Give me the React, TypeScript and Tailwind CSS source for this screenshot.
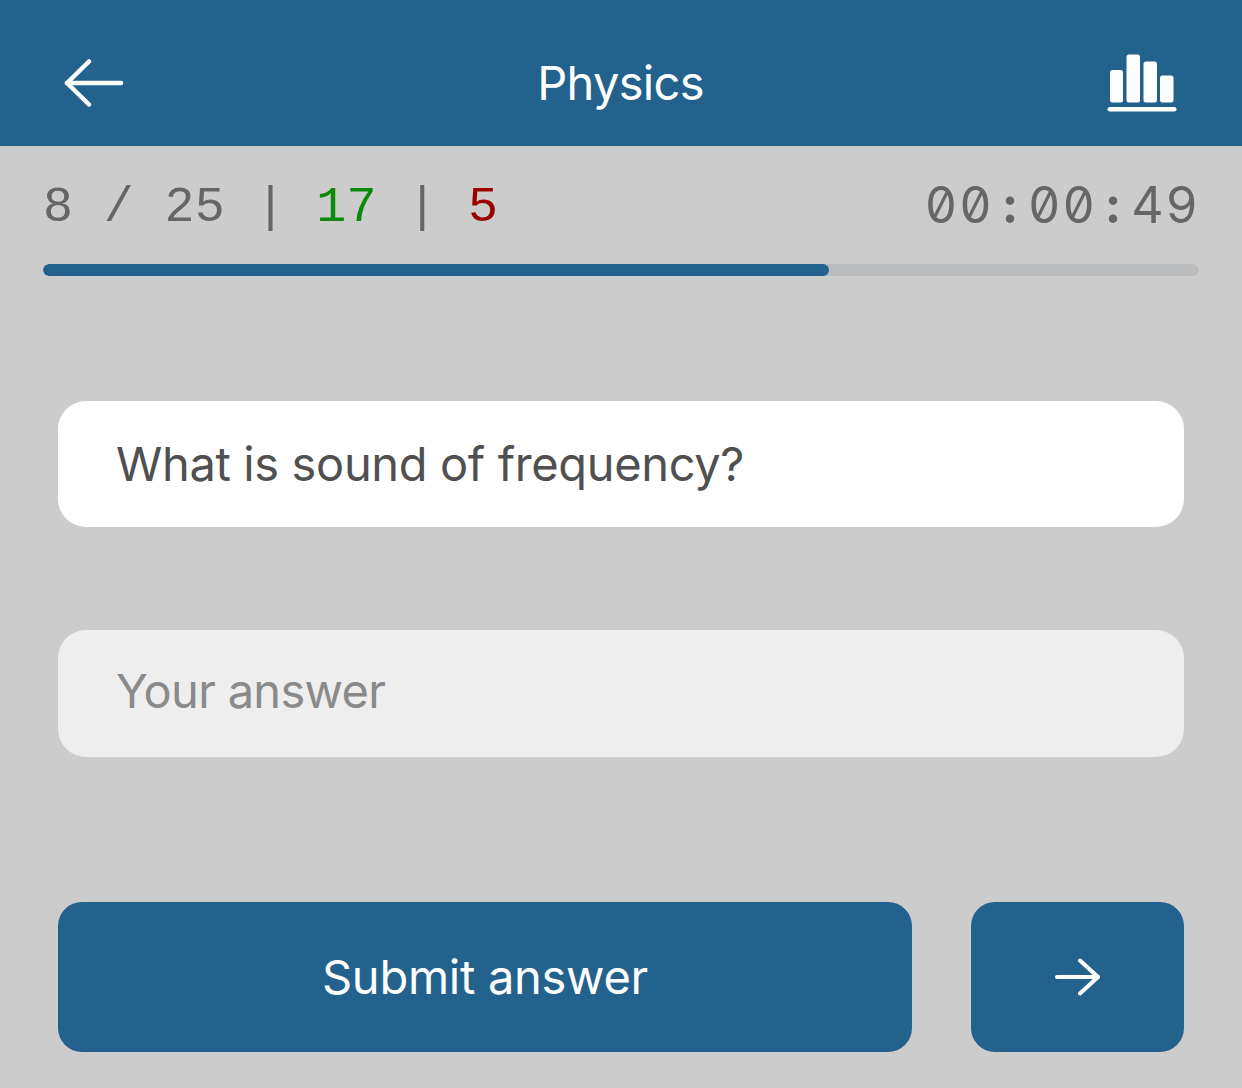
import React from 'react';

function BackArrow() {
  return (
    <svg width="60" height="48" viewBox="0 0 60 48" fill="none" stroke="white" strokeWidth="4.5" strokeLinecap="round" strokeLinejoin="round">
      <path d="M3 24H57" />
      <path d="M25 2.5L3 24L25 45.5" />
    </svg>
  );
}

function StatsIcon() {
  return (
    <svg width="70" height="58" viewBox="0 0 70 58" fill="white">
      <rect x="3" y="16" width="13" height="32.5" rx="2.5" />
      <rect x="19.5" y="0.5" width="13.5" height="48" rx="2.5" />
      <rect x="36.5" y="7.5" width="13.5" height="41" rx="2.5" />
      <rect x="53" y="21.5" width="13.5" height="27" rx="2.5" />
      <rect x="0.5" y="53" width="69" height="4.5" rx="2.25" />
    </svg>
  );
}

function NextArrow() {
  return (
    <svg width="46" height="38" viewBox="0 0 46 38" fill="none" stroke="white" strokeWidth="4" strokeLinecap="round" strokeLinejoin="round">
      <path d="M2 19H43" />
      <path d="M25 2.5L43 19L25 35.5" />
    </svg>
  );
}

const timer = '00:00:49'.split('');

export default function App() {
  const sans = "font-['Inter','Liberation_Sans',sans-serif]";

  return (
    <div className={`w-[1242px] h-[1088px] overflow-hidden bg-[#cccccc] ${sans}`}>
      {/* Header */}
      <div className="h-[146px] bg-[#24628e] grid grid-cols-[1fr_auto_1fr] items-center pt-[19px] pl-[64px] pr-[65px]">
        <BackArrow />
        <span className="text-[47px] leading-none text-white tracking-[-0.7px]">Physics</span>
        <div className="justify-self-end">
          <StatsIcon />
        </div>
      </div>

      {/* Counters */}
      <div className="px-[43px] pt-[33px]">
        <div className="flex items-center justify-between h-[58px] text-[50px] leading-none text-[#666666] font-['Liberation_Mono',monospace]">
          <div className="whitespace-pre tracking-[0.35px]">
            <span>8 / 25 | </span>
            <span className="text-[#0a8a0a]">17</span>
            <span> | </span>
            <span className="text-[#990000]">5</span>
          </div>
          <div className="flex pb-[6px] font-['Inter',sans-serif] slashed-zero tabular-nums">
            {timer.map((ch, i) => (
              <span key={i} className={ch === ':' ? 'w-[34.4px] text-center font-bold' : 'w-[34.4px] text-center'}>{ch}</span>
            ))}
          </div>
        </div>
        <div className="mt-[27px] h-[12px] rounded-full bg-[#babcbe] overflow-hidden">
          <div className="h-full w-[786px] rounded-full bg-[#24628e]" />
        </div>
      </div>

      {/* Question */}
      <div className="px-[58px] pt-[125px]">
        <div className="h-[126px] rounded-[28px] bg-white flex items-center px-[58px] text-[47px] text-[#505050] tracking-[-0.36px]">
          What is sound of frequency?
        </div>
        <div className="mt-[103px] h-[127px] rounded-[28px] bg-[#eeeeee] flex items-center px-[58px] pb-[4px] text-[47px] text-[#8a8a8a] tracking-[-0.7px]">
          Your answer
        </div>

        {/* Actions */}
        <div className="mt-[145px] flex gap-[59px]">
          <button className="flex-1 h-[150px] rounded-[24px] bg-[#24628e] text-white text-[47px] tracking-[-0.27px]">
            Submit answer
          </button>
          <button className="w-[213px] h-[150px] rounded-[24px] bg-[#24628e] flex items-center justify-center">
            <NextArrow />
          </button>
        </div>
      </div>
    </div>
  );
}
